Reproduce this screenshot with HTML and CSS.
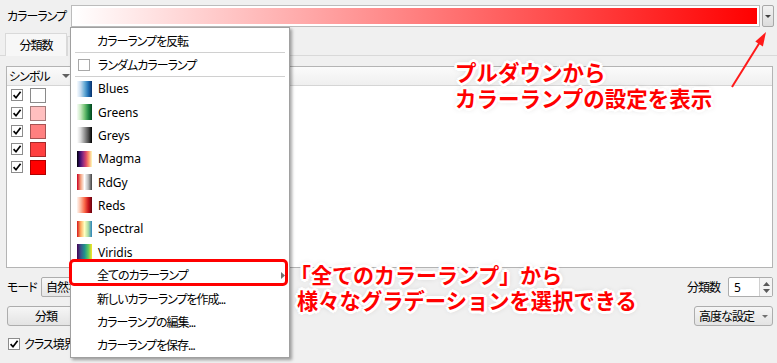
FILE: index.html
```html
<!doctype html>
<html>
    <head>
        <meta charset="utf-8">
        <title>カラーランプ設定</title>
        <link rel="stylesheet" href="styles.css">
    </head>

    <body>
        <div class="page">
            <div class="ramprow">
                <span class="lbl">カラーランプ</span>
                <div class="rampbox"><div class="rampfill"></div></div>
                <div class="dropbtn"><span class="tri"></span></div>
            </div>

            <div class="tabbar">
                <div class="tab active">分類数</div>
                <div class="tab">ヒストグラム</div>
            </div>

            <div class="panel">
                <div class="table">
                    <div class="thead">
                        <span>シンボル</span>
                        <span class="sorttri"></span>
                    </div>
                    <div class="trow"><span class="chk"><svg width="12" height="12" viewBox="0 0 12 12"><path d="M2.6 6.2 L5 8.8 L9.6 2.8" fill="none" stroke="#000" stroke-width="1.7"/></svg></span><span class="sw c1"></span></div>
                    <div class="trow"><span class="chk"><svg width="12" height="12" viewBox="0 0 12 12"><path d="M2.6 6.2 L5 8.8 L9.6 2.8" fill="none" stroke="#000" stroke-width="1.7"/></svg></span><span class="sw c2"></span></div>
                    <div class="trow"><span class="chk"><svg width="12" height="12" viewBox="0 0 12 12"><path d="M2.6 6.2 L5 8.8 L9.6 2.8" fill="none" stroke="#000" stroke-width="1.7"/></svg></span><span class="sw c3"></span></div>
                    <div class="trow"><span class="chk"><svg width="12" height="12" viewBox="0 0 12 12"><path d="M2.6 6.2 L5 8.8 L9.6 2.8" fill="none" stroke="#000" stroke-width="1.7"/></svg></span><span class="sw c4"></span></div>
                    <div class="trow"><span class="chk"><svg width="12" height="12" viewBox="0 0 12 12"><path d="M2.6 6.2 L5 8.8 L9.6 2.8" fill="none" stroke="#000" stroke-width="1.7"/></svg></span><span class="sw c5"></span></div>
                </div>
            </div>

            <div class="controls">
                <div class="crow">
                    <span class="modelbl">モード</span>
                    <div class="combo">自然なブレーク (Jenks)</div>
                    <div class="spacer"></div>
                    <span class="countlbl">分類数</span>
                    <div class="spin">
                        <span class="spinval en">5</span>
                        <div class="spinbtns">
                            <svg width="7" height="4" viewBox="0 0 7 4"><path d="M0 4 L3.5 0 L7 4 Z" fill="#5a5a5a"/></svg>
                            <svg width="7" height="4" viewBox="0 0 7 4"><path d="M0 0 L3.5 4 L7 0 Z" fill="#5a5a5a"/></svg>
                        </div>
                    </div>
                </div>
                <div class="crow gap9">
                    <div class="btn wide">分類</div>
                    <div class="spacer"></div>
                    <div class="btn adv">高度な設定<span class="tri small"></span></div>
                </div>
                <div class="crow gap10">
                    <span class="chk"><svg width="12" height="12" viewBox="0 0 12 12"><path d="M2.6 6.2 L5 8.8 L9.6 2.8" fill="none" stroke="#000" stroke-width="1.7"/></svg></span>
                    <span class="chklbl">クラス境界を連結する</span>
                </div>
            </div>

            <!-- dropdown menu of the colour ramp button -->
            <div class="menu">
                <div class="mi">カラーランプを反転</div>
                <div class="sep"></div>
                <div class="mi box"><span class="mchk"></span>ランダムカラーランプ</div>
                <div class="sep"></div>
                <div class="mi ic en"><span class="ico blues"></span>Blues</div>
                <div class="mi ic en"><span class="ico greens"></span>Greens</div>
                <div class="mi ic en"><span class="ico greys"></span>Greys</div>
                <div class="mi ic en"><span class="ico magma"></span>Magma</div>
                <div class="mi ic en"><span class="ico rdgy"></span>RdGy</div>
                <div class="mi ic en"><span class="ico reds"></span>Reds</div>
                <div class="mi ic en"><span class="ico spectral"></span>Spectral</div>
                <div class="mi ic en"><span class="ico viridis"></span>Viridis</div>
                <div class="mi ic sub">全てのカラーランプ<svg class="subarrow" width="4" height="7" viewBox="0 0 4 7"><path d="M0 0 L4 3.5 L0 7 Z" fill="#707070"/></svg></div>
                <div class="mi ic">新しいカラーランプを作成...</div>
                <div class="mi ic">カラーランプの編集...</div>
                <div class="mi ic">カラーランプを保存...</div>
            </div>

            <div class="hilite"></div>
            <div class="note notetop">プルダウンから<br>カラーランプの設定を表示</div>
            <div class="note notebottom">
                <div>「全てのカラーランプ」から</div>
                <div class="line2">様々なグラデーションを選択できる</div>
            </div>
            <svg class="arrow" width="777" height="363" viewBox="0 0 777 363">
                <line x1="732" y1="87" x2="760" y2="42" stroke="#ff1a1a" stroke-width="2"/>
                <path d="M766 32 L762.9 46.4 L755.3 41.6 Z" fill="#ff1a1a"/>
            </svg>
        </div>
    </body>

</html>
```

FILE: styles.css
```css
body{
    margin: 0px;
    background-color: #f0f0f0;
}

.page{
    position: relative;
    width: 777px;
    height: 363px;
    overflow: hidden;
    background-color: #f0f0f0;
    color: #000;
    font-family: "Noto Sans", "Noto Sans CJK JP", sans-serif;
    font-size: 12px;
    font-feature-settings: "palt";
    letter-spacing: -1px;
    white-space: nowrap;
}

.en{
    letter-spacing: 0px;
}

/* top row */
.ramprow{
    display: flex;
    align-items: center;
    height: 22px;
    padding: 5px 3px 0px 7px;
}

.lbl{
    flex: none;
    width: 64px;
}

.rampbox{
    flex: 1;
    height: 22px;
    box-sizing: border-box;
    border: 1px solid #bcbcbc;
    padding: 2px;
    background-color: #fff;
}

.rampfill{
    height: 100%;
    background: linear-gradient(to right, #ffffff, #ff0000);
}

.dropbtn{
    flex: none;
    width: 12px;
    height: 22px;
    margin-left: 2px;
    box-sizing: border-box;
    border: 1px solid #a8a8a8;
    border-radius: 2px;
    background: linear-gradient(#f2f2f2, #dcdcdc);
    display: flex;
    align-items: center;
    justify-content: center;
}

.tri{
    width: 0px;
    height: 0px;
    border-left: 3px solid transparent;
    border-right: 3px solid transparent;
    border-top: 3px solid #404040;
}

.tri.small{
    border-top-color: #707070;
    margin-left: 8px;
}

/* tabs */
.tabbar{
    display: flex;
    align-items: flex-end;
    height: 22px;
    padding: 6px 0px 0px 5px;
    position: relative;
    z-index: 1;
}

.tab{
    height: 19px;
    padding: 0px 8px;
    margin-bottom: -1px;
    border: 1px solid #d9d9d9;
    border-bottom: none;
    background-color: #f0f0f0;
    display: flex;
    align-items: center;
    justify-content: center;
}

.tab.active{
    width: 44px;
    height: 22px;
    background-color: #f7f7f7;
}

.panel{
    border-top: 1px solid #d9d9d9;
    padding: 10px 4px 0px 6px;
}

/* class table */
.table{
    height: 202px;
    box-sizing: border-box;
    border: 1px solid #b4b4b4;
    background-color: #fff;
}

.thead{
    height: 18px;
    border-bottom: 1px solid #d5d5d5;
    background: linear-gradient(#fbfbfb, #efefef);
    display: flex;
    align-items: center;
    padding-left: 2px;
}

.sorttri{
    width: 0px;
    height: 0px;
    margin-left: 12px;
    border-left: 4px solid transparent;
    border-right: 4px solid transparent;
    border-top: 4px solid #606060;
}

.trow{
    height: 18px;
    display: flex;
    align-items: center;
    padding-left: 4px;
}

.chk{
    flex: none;
    width: 12px;
    height: 12px;
    box-sizing: border-box;
    border: 1px solid #8c8c8c;
    background-color: #fff;
    display: flex;
    align-items: center;
    justify-content: center;
}

.chk svg{
    flex: none;
}

.sw{
    width: 16px;
    height: 15px;
    margin-left: 7px;
    box-sizing: border-box;
    border: 1px solid rgba(0, 0, 0, 0.35);
}

.c1{ background-color: #ffffff; border-color: #8a8a8a; }
.c2{ background-color: #ffbfbf; }
.c3{ background-color: #ff8080; }
.c4{ background-color: #ff4040; }
.c5{ background-color: #ff0000; border-color: #b00000; }

/* bottom controls */
.controls{
    padding: 9px 4px 0px 7px;
}

.crow{
    display: flex;
    align-items: center;
    height: 20px;
}

.crow.gap9{
    margin-top: 9px;
}

.crow.gap10{
    margin-top: 11px;
    height: 14px;
}

.modelbl{
    width: 34px;
}

.combo{
    width: 180px;
    height: 20px;
    box-sizing: border-box;
    border: 1px solid #adadad;
    border-radius: 2px;
    background: linear-gradient(#f7f7f7, #e6e6e6);
    padding-left: 4px;
    display: flex;
    align-items: center;
}

.spacer{
    flex: 1;
}

.countlbl{
    margin-right: 8px;
}

.spin{
    width: 45px;
    height: 20px;
    box-sizing: border-box;
    border: 1px solid #adadad;
    border-radius: 2px;
    background-color: #fff;
    display: flex;
}

.spinval{
    flex: 1;
    padding-left: 5px;
    display: flex;
    align-items: center;
}

.spinbtns{
    width: 12px;
    border-left: 1px solid #d0d0d0;
    background-color: #f4f4f4;
    display: flex;
    flex-direction: column;
    align-items: center;
    justify-content: center;
    gap: 3px;
}

.btn{
    height: 20px;
    box-sizing: border-box;
    border: 1px solid #adadad;
    border-radius: 3px;
    background: linear-gradient(#f6f6f6, #e3e3e3);
    display: flex;
    align-items: center;
    justify-content: center;
}

.btn.wide{
    width: 78px;
}

.btn.adv{
    width: 79px;
}

.chklbl{
    margin-left: 4px;
}

.crow.gap10 .chk{
    margin-left: 1px;
}

/* popup menu */
.menu{
    position: absolute;
    z-index: 2;
    left: 70px;
    top: 27px;
    width: 218px;
    padding-top: 1px;
    border: 1px solid #a0a0a0;
    background-color: #fff;
    box-shadow: 2px 2px 3px rgba(0, 0, 0, 0.35);
}

.mi{
    height: 23px;
    padding-left: 26px;
    display: flex;
    align-items: center;
}

.mi.ic{
    height: 23.35px;
}

.mi.box{
    padding-left: 7px;
}

.mi.ic .ico{
    margin-left: -20px;
}

.mchk{
    width: 12px;
    height: 12px;
    margin-right: 8px;
    box-sizing: border-box;
    border: 1px solid #a8a8a8;
    background-color: #fff;
}

.ico{
    width: 15px;
    height: 16px;
    margin-right: 6px;
}

.blues{ background: linear-gradient(to right, #f7fbff, #c6dbef, #6baed6, #2171b5, #08306b); }
.greens{ background: linear-gradient(to right, #f7fcf5, #c7e9c0, #74c476, #238b45, #00441b); }
.greys{ background: linear-gradient(to right, #ffffff, #d9d9d9, #969696, #525252, #000000); }
.magma{ background: linear-gradient(to right, #000004, #3b0f70, #8c2981, #de4968, #fe9f6d, #fcfdbf); }
.rdgy{ background: linear-gradient(to right, #ca0020, #f4a582, #ffffff, #bababa, #404040); }
.reds{ background: linear-gradient(to right, #fff5f0, #fcbba1, #fb6a4a, #cb181d, #67000d); }
.spectral{ background: linear-gradient(to right, #d7191c, #fdae61, #ffffbf, #abdda4, #2b83ba); }
.viridis{ background: linear-gradient(to right, #440154, #3b528b, #21918c, #5ec962, #fde725); }

.subarrow{
    margin-left: auto;
    margin-right: 4px;
}

.sep{
    height: 1px;
    margin: 0px 4px;
    background-color: #d0d0d0;
}

/* annotations */
.hilite{
    position: absolute;
    z-index: 3;
    left: 69px;
    top: 259px;
    width: 219px;
    height: 27px;
    box-sizing: border-box;
    border: 3px solid #ff0000;
    border-radius: 5px;
}

.note{
    position: absolute;
    z-index: 3;
    color: #ff0000;
    font-family: "Noto Sans CJK JP", sans-serif;
    font-weight: 700;
    font-feature-settings: normal;
    letter-spacing: 0px;
    text-shadow:
        2px 0 0 #fff, -2px 0 0 #fff, 0 2px 0 #fff, 0 -2px 0 #fff,
        2px 2px 0 #fff, -2px -2px 0 #fff, 2px -2px 0 #fff, -2px 2px 0 #fff,
        3px 0 0 #fff, -3px 0 0 #fff, 0 3px 0 #fff, 0 -3px 0 #fff,
        0 0 6px rgba(0, 0, 0, 0.3);
}

.notetop{
    left: 455px;
    top: 59px;
    font-size: 21.5px;
    line-height: 26px;
}

.notebottom{
    left: 290px;
    top: 262px;
    font-size: 21px;
    line-height: 25px;
}

.notebottom .line2{
    padding-left: 7px;
    font-size: 21.3px;
}

.arrow{
    position: absolute;
    z-index: 3;
    left: 0px;
    top: 0px;
}
```
